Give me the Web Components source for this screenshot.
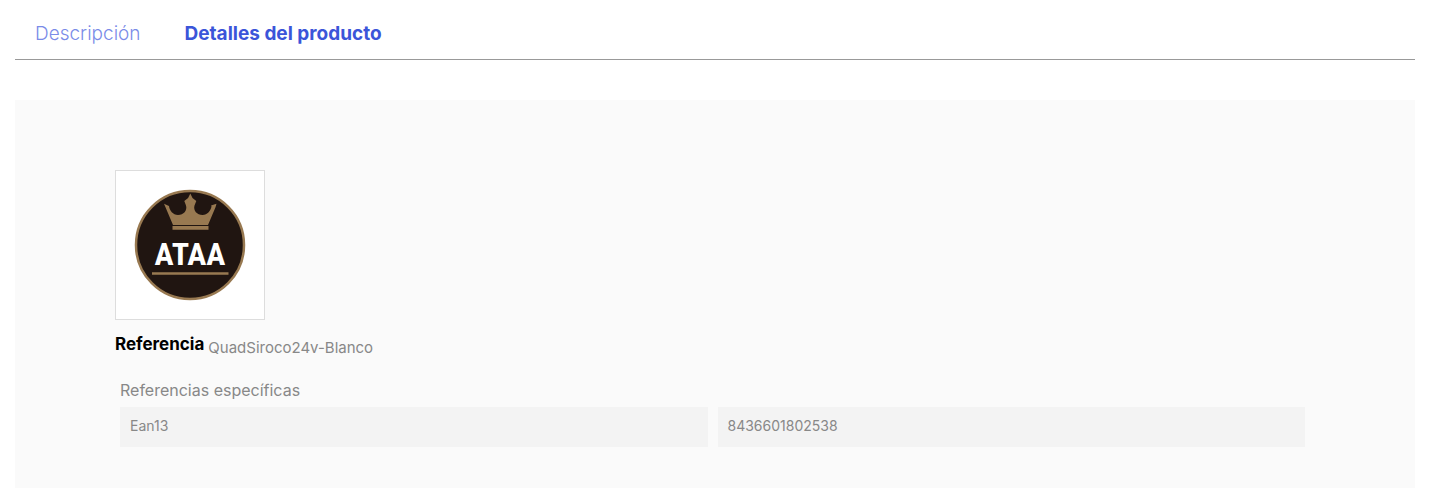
<!DOCTYPE html>
<html lang="es">
<head>
<meta charset="utf-8">
<meta name="viewport" content="width=device-width, initial-scale=1">
<title>Detalles del producto</title>
<style>
  body {
    margin: 0;
    background: #fff;
    color: #888;
    font-family: Inter, "Open Sans", sans-serif;
    font-size: 14px;
    line-height: 20px;
  }
</style>
</head>
<body>

<product-info>
  <product-tabs slot="tabs">
    <product-tab href="#description">Descripción</product-tab>
    <product-tab href="#product-details" active>Detalles del producto</product-tab>
  </product-tabs>
  <brand-logo href="#ataa"></brand-logo>
  <product-reference label="Referencia">QuadSiroco24v-Blanco</product-reference>
  <product-features heading="Referencias específicas">
    <product-feature name="Ean13">8436601802538</product-feature>
  </product-features>
</product-info>

<script>
const createTemplate = (html) => {
  const template = document.createElement("template");
  template.innerHTML = html;
  return template;
};

const templateProductInfo = createTemplate(`
    <style>
        :host {
            display: flex;
            flex-direction: column;
            box-sizing: border-box;
            min-height: 100vh;
            padding: 0 24px 0 15px;
        }

        .panel {
            flex: 1;
            margin-top: 40px;
            padding: 70px 100px 40px;
            background: #fafafa;
        }
    </style>
    <slot name="tabs"></slot>
    <section class="panel" id="product-details">
        <slot></slot>
    </section>
`);

class ProductInfo extends HTMLElement {
  constructor() {
    super();
    this.attachShadow({ mode: "open" });
    this.shadowRoot.appendChild(templateProductInfo.content.cloneNode(true));
  }
}

const templateProductTabs = createTemplate(`
    <style>
        :host {
            display: block;
            border-bottom: 1px solid #999;
        }

        nav {
            display: flex;
            flex-wrap: wrap;
            gap: 4px;
        }
    </style>
    <nav>
        <slot></slot>
    </nav>
`);

class ProductTabs extends HTMLElement {
  constructor() {
    super();
    this.attachShadow({ mode: "open" });
    this.shadowRoot.appendChild(templateProductTabs.content.cloneNode(true));
  }
}

const templateProductTab = createTemplate(`
    <style>
        :host {
            display: block;
        }

        a {
            display: block;
            padding: 20px 20px 11px;
            color: #7a8be8;
            font-size: 19px;
            font-weight: 300;
            line-height: 28px;
            text-decoration: none;
        }

        a:hover {
            color: #3b55d9;
        }

        :host([active]) a {
            color: #3b55d9;
            font-weight: 700;
        }
    </style>
    <a><slot></slot></a>
`);

class ProductTab extends HTMLElement {
  constructor() {
    super();
    this.attachShadow({ mode: "open" });
    this.shadowRoot.appendChild(templateProductTab.content.cloneNode(true));
  }
  connectedCallback() {
    const link = this.shadowRoot.querySelector("a");
    link.href = this.getAttribute("href");
    if (this.hasAttribute("active")) {
      link.setAttribute("aria-current", "true");
    }
  }
}

const templateBrandLogo = createTemplate(`
    <style>
        :host {
            display: block;
        }

        a {
            display: block;
            box-sizing: border-box;
            width: 150px;
            height: 150px;
            border: 1px solid #ddd;
            background: #fff;
        }

        svg {
            display: block;
            width: 100%;
            height: 100%;
        }

        text {
            fill: #fff;
            font-family: "Liberation Sans Narrow", "Roboto Condensed", "Open Sans Condensed", Roboto, sans-serif;
            font-size: 32px;
            font-weight: 700;
            text-anchor: middle;
        }
    </style>
    <a>
        <svg viewBox="1 1 148 148" role="img" aria-label="ATAA">
            <circle cx="75" cy="75" r="54" fill="#201511" stroke="#987951" stroke-width="2.5"/>
            <g fill="#987951">
                <path d="M75.300 23.500 77.500 28l3.800 3-1.800 4.500C78 40.500 82 45 87.500 45c5 0 8.500-4.500 9-9l-.5-.5 5.500-1.700-1 3.500L93 55H58l-7.500-17.700-1.500-3.500 5 2.200c.5 4.500 4 9 9 9 5.500 0 9.500-4.500 8-9.500L69.300 31l3.800-3z"/>
                <path d="M57.500 56h36v3.700h-36zM37 102.300h76.500v2.400H37z"/>
            </g>
            <text x="75" y="95">ATAA</text>
        </svg>
    </a>
`);

class BrandLogo extends HTMLElement {
  constructor() {
    super();
    this.attachShadow({ mode: "open" });
    this.shadowRoot.appendChild(templateBrandLogo.content.cloneNode(true));
  }
  connectedCallback() {
    this.shadowRoot.querySelector("a").href = this.getAttribute("href");
  }
}

const templateProductReference = createTemplate(`
    <style>
        :host {
            display: flex;
            align-items: flex-start;
            gap: 4px;
            margin-top: 14px;
        }

        strong {
            color: #000;
            font-size: 17px;
            font-weight: 700;
        }

        span {
            padding-top: 4px;
            font-size: 15px;
        }
    </style>
    <strong></strong>
    <span><slot></slot></span>
`);

class ProductReference extends HTMLElement {
  constructor() {
    super();
    this.attachShadow({ mode: "open" });
    this.shadowRoot.appendChild(templateProductReference.content.cloneNode(true));
  }
  connectedCallback() {
    this.shadowRoot.querySelector("strong").textContent = this.getAttribute("label");
  }
}

const templateProductFeatures = createTemplate(`
    <style>
        :host {
            display: block;
            margin-top: 22px;
            padding: 0 10px 0 5px;
        }

        h3 {
            margin: 0 0 7px;
            font-size: 16px;
            font-weight: 400;
        }
    </style>
    <h3></h3>
    <slot></slot>
`);

class ProductFeatures extends HTMLElement {
  constructor() {
    super();
    this.attachShadow({ mode: "open" });
    this.shadowRoot.appendChild(templateProductFeatures.content.cloneNode(true));
  }
  connectedCallback() {
    this.shadowRoot.querySelector("h3").textContent = this.getAttribute("heading");
  }
}

const templateProductFeature = createTemplate(`
    <style>
        :host {
            display: block;
        }

        dl {
            display: grid;
            grid-template-columns: 1fr 1fr;
            gap: 10px;
            margin: 0;
        }

        dt, dd {
            margin: 0;
            padding: 9px 10px 11px;
            background: #f3f3f3;
        }
    </style>
    <dl>
        <dt></dt>
        <dd><slot></slot></dd>
    </dl>
`);

class ProductFeature extends HTMLElement {
  constructor() {
    super();
    this.attachShadow({ mode: "open" });
    this.shadowRoot.appendChild(templateProductFeature.content.cloneNode(true));
  }
  connectedCallback() {
    this.shadowRoot.querySelector("dt").textContent = this.getAttribute("name");
  }
}

window.customElements.define("product-info", ProductInfo);
window.customElements.define("product-tabs", ProductTabs);
window.customElements.define("product-tab", ProductTab);
window.customElements.define("brand-logo", BrandLogo);
window.customElements.define("product-reference", ProductReference);
window.customElements.define("product-features", ProductFeatures);
window.customElements.define("product-feature", ProductFeature);
</script>
</body>
</html>
